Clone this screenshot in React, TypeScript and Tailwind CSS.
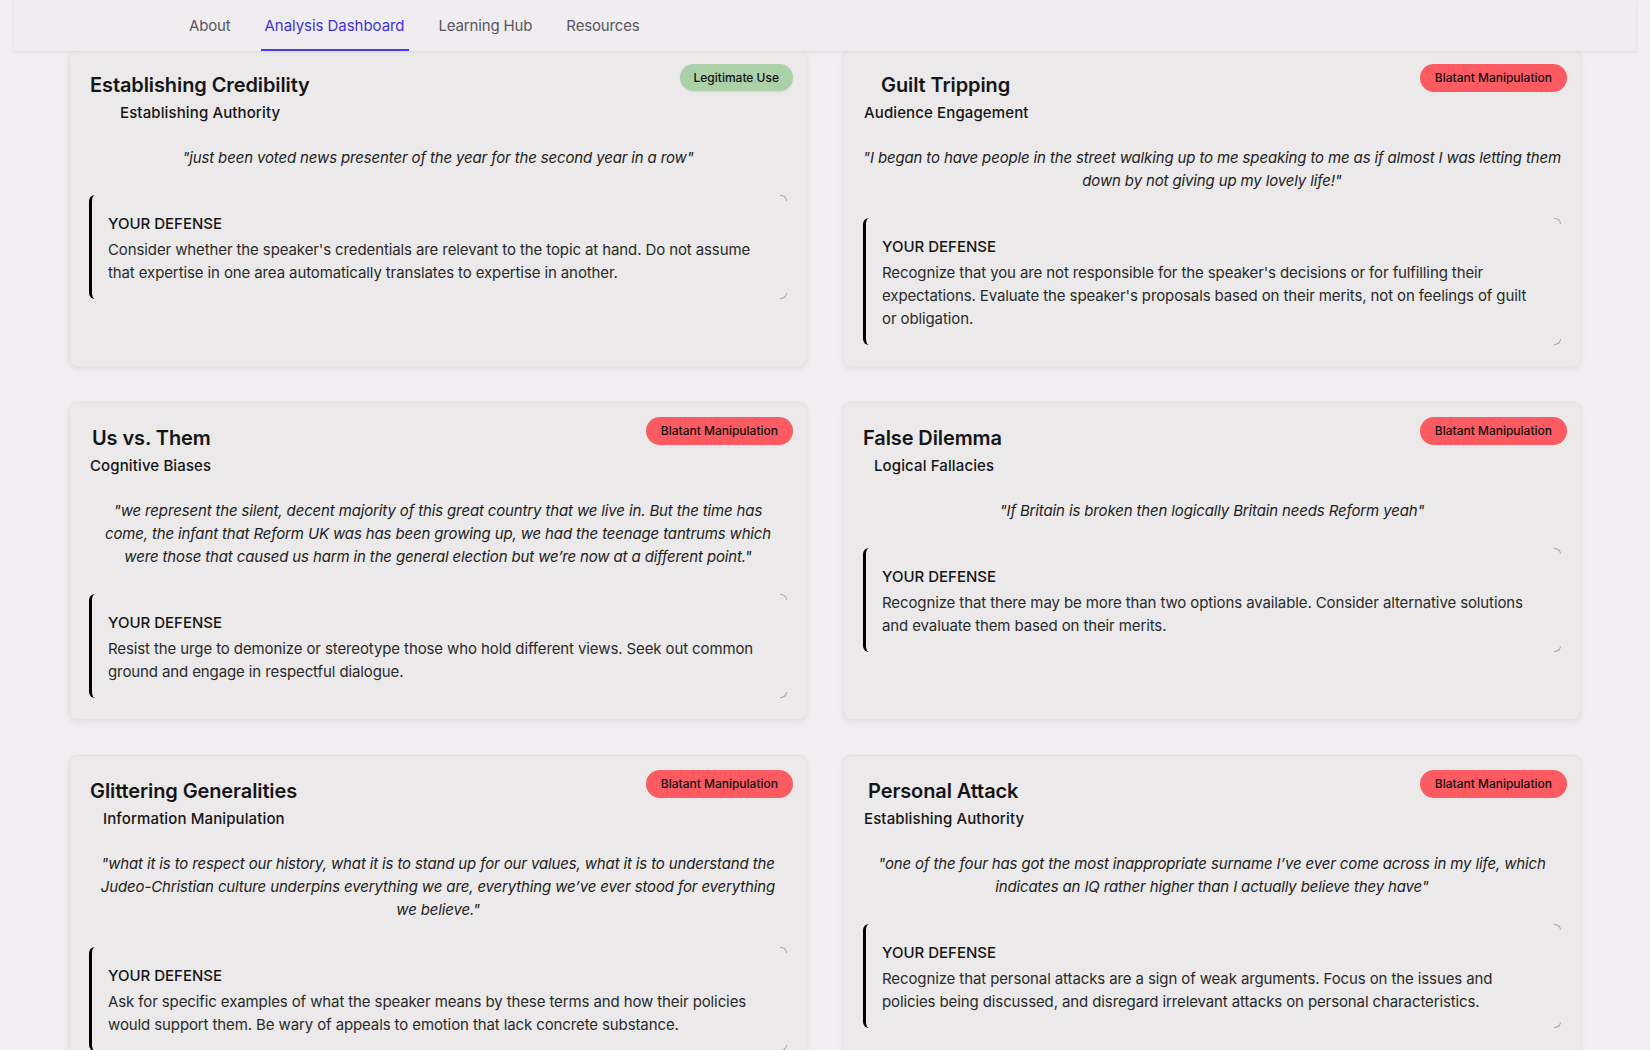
import React from "react";

type Card = {
  title: string;
  subtitle: string;
  badge: "legit" | "blatant";
  quote: string[];
  defense: string[];
  tOff: string;
  sOff: string;
};

const cards: Card[] = [
  {
    title: "Establishing Credibility",
    subtitle: "Establishing Authority",
    badge: "legit",
    quote: ["\"just been voted news presenter of the year for the second year in a row\""],
    defense: [
      "Consider whether the speaker's credentials are relevant to the topic at hand. Do not assume",
      "that expertise in one area automatically translates to expertise in another.",
    ],
    tOff: "ml-[1px]",
    sOff: "ml-[31px]",
  },
  {
    title: "Guilt Tripping",
    subtitle: "Audience Engagement",
    badge: "blatant",
    quote: [
      "\"I began to have people in the street walking up to me speaking to me as if almost I was letting them",
      "down by not giving up my lovely life!\"",
    ],
    defense: [
      "Recognize that you are not responsible for the speaker's decisions or for fulfilling their",
      "expectations. Evaluate the speaker's proposals based on their merits, not on feelings of guilt",
      "or obligation.",
    ],
    tOff: "ml-[18px]",
    sOff: "ml-[1px]",
  },
  {
    title: "Us vs. Them",
    subtitle: "Cognitive Biases",
    badge: "blatant",
    quote: [
      "\"we represent the silent, decent majority of this great country that we live in. But the time has",
      "come, the infant that Reform UK was has been growing up, we had the teenage tantrums which",
      "were those that caused us harm in the general election but we’re now at a different point.\"",
    ],
    defense: [
      "Resist the urge to demonize or stereotype those who hold different views. Seek out common",
      "ground and engage in respectful dialogue.",
    ],
    tOff: "ml-[3px]",
    sOff: "ml-[1px]",
  },
  {
    title: "False Dilemma",
    subtitle: "Logical Fallacies",
    badge: "blatant",
    quote: ["\"If Britain is broken then logically Britain needs Reform yeah\""],
    defense: [
      "Recognize that there may be more than two options available. Consider alternative solutions",
      "and evaluate them based on their merits.",
    ],
    tOff: "ml-[0px]",
    sOff: "ml-[11px]",
  },
  {
    title: "Glittering Generalities",
    subtitle: "Information Manipulation",
    badge: "blatant",
    quote: [
      "\"what it is to respect our history, what it is to stand up for our values, what it is to understand the",
      "Judeo-Christian culture underpins everything we are, everything we’ve ever stood for everything",
      "we believe.\"",
    ],
    defense: [
      "Ask for specific examples of what the speaker means by these terms and how their policies",
      "would support them. Be wary of appeals to emotion that lack concrete substance.",
    ],
    tOff: "ml-[1px]",
    sOff: "ml-[14px]",
  },
  {
    title: "Personal Attack",
    subtitle: "Establishing Authority",
    badge: "blatant",
    quote: [
      "\"one of the four has got the most inappropriate surname I’ve ever come across in my life, which",
      "indicates an IQ rather higher than I actually believe they have\"",
    ],
    defense: [
      "Recognize that personal attacks are a sign of weak arguments. Focus on the issues and",
      "policies being discussed, and disregard irrelevant attacks on personal characteristics.",
    ],
    tOff: "ml-[5px]",
    sOff: "ml-[1px]",
  },
];

function Lines({ lines }: { lines: string[] }) {
  return (
    <>
      {lines.map((l, i) => (
        <React.Fragment key={i}>
          {l}
          {i < lines.length - 1 && <br />}
        </React.Fragment>
      ))}
    </>
  );
}

function Badge({ kind }: { kind: "legit" | "blatant" }) {
  if (kind === "legit") {
    return (
      <span className="absolute top-[14px] right-[13px] flex h-[27px] items-center rounded-full bg-[#acd0a7] px-[14px] text-[12px] font-medium text-[#111] shadow-[0_1px_2px_rgba(0,0,0,0.08)]">
        Legitimate Use
      </span>
    );
  }
  return (
    <span className="absolute top-[14px] right-[13px] flex h-[28px] items-center rounded-full bg-[#fd5b61] px-[15px] text-[12px] font-medium text-[#111]">
      Blatant Manipulation
    </span>
  );
}

function CardView({ c }: { c: Card }) {
  return (
    <div className="relative rounded-lg border border-[#e3e1e2] bg-[#ebe9ea] px-[19px] pt-[23px] pb-[21px] shadow-[0_2px_6px_rgba(0,0,0,0.07)]">
      <Badge kind={c.badge} />
      <h2 className={`${c.tOff} text-[20px] leading-6 font-semibold tracking-[-0.1px] text-[#151515]`}>{c.title}</h2>
      <h3 className={`${c.sOff} mt-[5px] text-[15px] leading-[22px] font-medium tracking-[0.12px] text-[#151515]`}>{c.subtitle}</h3>
      <p className="mt-[22px] whitespace-nowrap text-center text-[15px] leading-[23px] italic tracking-[-0.14px] text-[#222]">
        <Lines lines={c.quote} />
      </p>
      <div className="relative mt-[26px] rounded-md border-l-[3px] border-black pt-[18px] pr-4 pb-[15px] pl-4">
        <span className="absolute top-0 right-0 h-[6px] w-[7px] rounded-tr-[6px] border-t border-r border-[#a8a6a7]" />
        <span className="absolute right-0 bottom-0 h-[6px] w-[7px] rounded-br-[6px] border-r border-b border-[#a8a6a7]" />
        <div className="text-[15px] leading-[22px] font-medium text-[#151515]">YOUR DEFENSE</div>
        <p className="mt-[3px] whitespace-nowrap text-[15px] leading-[23px] tracking-[-0.11px] text-[#2a2a2a]">
          <Lines lines={c.defense} />
        </p>
      </div>
    </div>
  );
}

export default function App() {
  const navItems = ["About", "Analysis Dashboard", "Learning Hub", "Resources"];
  return (
    <div className="min-h-screen bg-[#f0eef0] font-['Inter',sans-serif]">
      <nav className="sticky top-0 z-10 mx-[14px] flex h-[51px] items-stretch gap-[26px] bg-[#efedef] pl-[171px] shadow-[0_1px_3px_rgba(0,0,0,0.09)]">
        {navItems.map((n) => {
          const active = n === "Analysis Dashboard";
          return (
            <a
              key={n}
              className={
                active
                  ? "flex items-center border-b-2 border-[#4a3be0] px-1 pt-[4px] text-[15px] tracking-[-0.05px] text-[#3f33d6]"
                  : "flex items-center border-b-2 border-transparent px-1 pt-[4px] text-[15px] tracking-[-0.15px] text-[#5a5660]"
              }
            >
              {n}
            </a>
          );
        })}
      </nav>
      <main className="mx-auto -mt-[2px] grid w-[1512px] grid-cols-2 gap-x-9 gap-y-[35px] pb-10">
        {cards.map((c) => (
          <CardView key={c.title} c={c} />
        ))}
      </main>
    </div>
  );
}
